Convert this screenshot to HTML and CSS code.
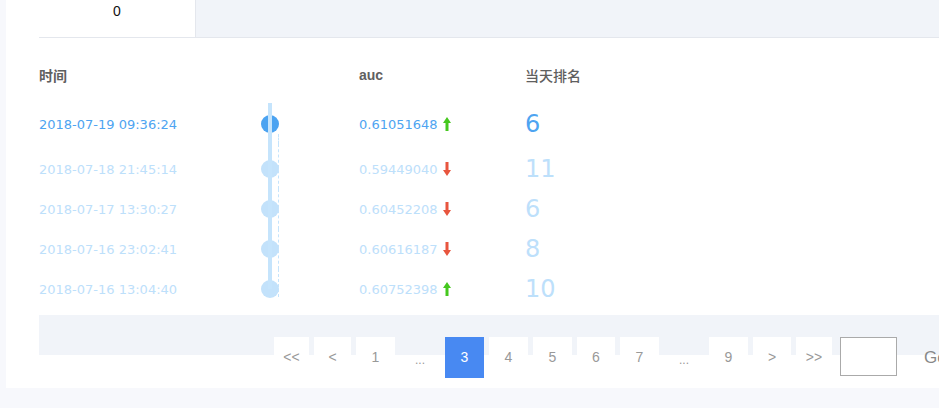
FILE: index.html
```html
<!DOCTYPE html>
<html lang="zh">
<head>
<meta charset="utf-8">
<link rel="stylesheet" href="styles.css">
</head>
<body>
<div class="page">
  <div class="card">
    <div class="tabs">
      <div class="tab">0</div>
    </div>
    <div class="table">
      <div class="row head">
        <div class="c-date">时间</div>
        <div class="c-line"></div>
        <div class="c-auc">auc</div>
        <div class="c-rank">当天排名</div>
      </div>
      <div class="row active first">
        <div class="c-date">2018-07-19 09:36:24</div>
        <div class="c-line"><span class="vline"></span><span class="dash"></span><span class="dot"></span></div>
        <div class="c-auc">0.61051648<svg class="arrow" width="8" height="14" viewBox="0 0 8 14"><path d="M4 0 L8 6 L5.5 6 L5.5 14 L2.5 14 L2.5 6 L0 6 Z" fill="#45c81e"/></svg></div>
        <div class="c-rank">6</div>
      </div>
      <div class="row">
        <div class="c-date">2018-07-18 21:45:14</div>
        <div class="c-line"><span class="vline"></span><span class="dash"></span><span class="dot"></span></div>
        <div class="c-auc">0.59449040<svg class="arrow" width="8" height="14" viewBox="0 0 8 14"><path d="M4 14 L8 8 L5.5 8 L5.5 0 L2.5 0 L2.5 8 L0 8 Z" fill="#e8553e"/></svg></div>
        <div class="c-rank">11</div>
      </div>
      <div class="row">
        <div class="c-date">2018-07-17 13:30:27</div>
        <div class="c-line"><span class="vline"></span><span class="dash"></span><span class="dot"></span></div>
        <div class="c-auc">0.60452208<svg class="arrow" width="8" height="14" viewBox="0 0 8 14"><path d="M4 14 L8 8 L5.5 8 L5.5 0 L2.5 0 L2.5 8 L0 8 Z" fill="#e8553e"/></svg></div>
        <div class="c-rank">6</div>
      </div>
      <div class="row">
        <div class="c-date">2018-07-16 23:02:41</div>
        <div class="c-line"><span class="vline"></span><span class="dash"></span><span class="dot"></span></div>
        <div class="c-auc">0.60616187<svg class="arrow" width="8" height="14" viewBox="0 0 8 14"><path d="M4 14 L8 8 L5.5 8 L5.5 0 L2.5 0 L2.5 8 L0 8 Z" fill="#e8553e"/></svg></div>
        <div class="c-rank">8</div>
      </div>
      <div class="row last">
        <div class="c-date">2018-07-16 13:04:40</div>
        <div class="c-line"><span class="vline"></span><span class="dash"></span><span class="dot"></span></div>
        <div class="c-auc">0.60752398<svg class="arrow" width="8" height="14" viewBox="0 0 8 14"><path d="M4 0 L8 6 L5.5 6 L5.5 14 L2.5 14 L2.5 6 L0 6 Z" fill="#45c81e"/></svg></div>
        <div class="c-rank">10</div>
      </div>
    </div>
    <div class="pager-band">
      <div class="pager">
        <span class="pg w35">&lt;&lt;</span>
        <span class="pg w37">&lt;</span>
        <span class="pg w39">1</span>
        <span class="pg w40 ell">...</span>
        <span class="pg w39 cur">3</span>
        <span class="pg w39">4</span>
        <span class="pg w39">5</span>
        <span class="pg w38">6</span>
        <span class="pg w39">7</span>
        <span class="pg w40 ell">...</span>
        <span class="pg w39">9</span>
        <span class="pg w38">&gt;</span>
        <span class="pg w36">&gt;&gt;</span>
        <span class="pg-input"></span>
        <span class="pg-go">Go</span>
      </div>
    </div>
  </div>
  <div class="foot"></div>
</div>
</body>
</html>
```
FILE: styles.css
```css
html, body {
  margin: 0;
  padding: 0;
}
body {
  background: #ffffff;
  width: 939px;
  height: 415px;
  overflow: hidden;
  font-family: "DejaVu Sans", "Noto Sans CJK SC", sans-serif;
}
.page {
  padding-left: 6px;
  background: #f7f8fc;
}
.card {
  background: #ffffff;
  height: 388px;
  padding-left: 33px;
  box-sizing: border-box;
  overflow: hidden;
}
.tabs {
  display: flex;
  height: 37px;
  background: #f1f4f9;
  border-bottom: 1px solid #e4e7ed;
}
.tab {
  width: 156px;
  background: #ffffff;
  border-right: 1px solid #e4e7ed;
  text-align: center;
  font-family: "Liberation Sans", sans-serif;
  font-size: 14px;
  line-height: 23px;
  color: #111;
}
.table {
  padding-top: 12px;
}
.row {
  display: grid;
  grid-template-columns: 222px 18px 80px 166px 1fr;
  height: 40px;
  align-items: center;
  color: #bde0fb;
  font-size: 13px;
}
.row > .c-auc { grid-column: 4; }
.row > .c-rank { grid-column: 5; }
.row.head {
  height: 50px;
  margin-bottom: 4px;
  color: #5f6060;
  font-family: "Noto Sans CJK SC", sans-serif;
  font-size: 14px;
  font-weight: 700;
}
.row.head .c-auc {
  font-family: "Liberation Sans", sans-serif;
  font-weight: 700;
  font-size: 14px;
}
.row.head .c-rank {
  font-weight: 500;
  font-size: 14px;
}
.row.first {
  margin-bottom: 5px;
}
.row.active {
  color: #4ea4f1;
}
.c-auc {
  display: flex;
  align-items: center;
}
.arrow {
  margin-left: 5px;
}
.c-rank {
  font-size: 24px;
}
.c-line {
  position: relative;
  height: 100%;
  align-self: stretch;
}
.vline {
  position: absolute;
  left: 7px;
  width: 4px;
  top: -1px;
  bottom: 0;
  background: #c5e4fc;
  z-index: 2;
}
.row.last .vline { bottom: 50%; }
.row.first + .row .vline { top: -5px; }
.dash {
  position: absolute;
  left: 17px;
  top: 0;
  bottom: 0;
  border-left: 1px dashed #c5e4fc;
}
.row.first .dash { top: 75%; }
.row.first + .row .dash { top: -5px; }
.row.last .dash { bottom: 30%; }
.dot {
  position: absolute;
  left: 0;
  top: 50%;
  margin-top: -9px;
  width: 18px;
  height: 18px;
  border-radius: 50%;
  background: #c3e2fb;
  z-index: 1;
}
.row.active .dot {
  background: #4ba3f1;
}
.pager-band {
  margin-top: 6px;
  height: 40px;
  background: #f1f4f9;
}
.pager {
  display: flex;
  align-items: flex-start;
  padding-top: 22px;
  padding-left: 235px;
  gap: 5px;
  font-family: "Liberation Sans", sans-serif;
  font-size: 14px;
  color: #999;
  white-space: nowrap;
}
.pg {
  flex: none;
  height: 41px;
  line-height: 41px;
  text-align: center;
  background: #ffffff;
}
.pg.ell {
  background: transparent;
  line-height: 46px;
  font-size: 12px;
}
.pg.cur {
  background: #4889f2;
  color: #ffffff;
}
.w35 { width: 35px; }
.w36 { width: 36px; }
.w37 { width: 37px; }
.w38 { width: 38px; }
.w39 { width: 39px; }
.w40 { width: 40px; }
.pg-input {
  flex: none;
  margin-left: 3px;
  width: 55px;
  height: 37px;
  border: 1px solid #aaaaaa;
  background: #ffffff;
}
.pg-go {
  flex: none;
  margin-left: 22px;
  line-height: 41px;
  font-size: 17px;
  color: #888;
}
.foot {
  height: 20px;
}
```
